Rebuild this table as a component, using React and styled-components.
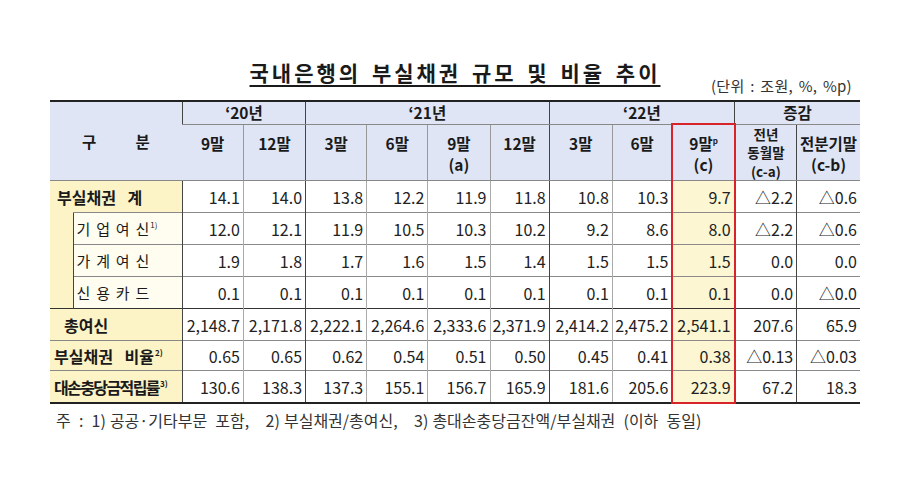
import React from 'react';
import styled, { createGlobalStyle } from 'styled-components';

const GlobalStyle = createGlobalStyle`
  html, body {
    margin: 0;
    padding: 0;
    background: #ffffff;
  }
  body {
    font-family: 'Noto Sans CJK KR', 'Noto Sans', sans-serif;
    color: #222;
  }
`;

const Page = styled.div`
  width: 900px;
  height: 479px;
  padding: 58px 0 0 50px;
  box-sizing: border-box;
  display: flex;
  flex-direction: column;
`;

const Heading = styled.div`
  width: 810px;
  padding-bottom: 5px;
  display: flex;
  flex-direction: column;
`;

const Title = styled.h1`
  margin: 0;
  text-align: center;
  font-size: 21px;
  line-height: 28px;
  font-weight: 700;
  letter-spacing: 3px;
  word-spacing: 3px;
  color: #1a1a1a;
  text-decoration: underline;
  text-decoration-thickness: 1.5px;
  text-underline-offset: 4px;
`;

const Unit = styled.div`
  margin-top: -9px;
  padding-right: 8px;
  text-align: right;
  font-size: 15px;
  line-height: 18px;
  letter-spacing: 0.3px;
  word-spacing: 2px;
  color: #333;
`;

const Table = styled.table`
  width: 810px;
  table-layout: fixed;
  border-collapse: collapse;
  border-top: 2px solid #222;
  border-bottom: 2px solid #222;
  font-size: 16px;
  sup {
    line-height: 0;
  }
`;

const Row = styled.tr`
  height: ${(p) => p.$h};
`;

const HeadCell = styled.th`
  background: #dfe5f5;
  font-weight: 700;
  font-size: ${(p) => (p.$tight ? '13.5px' : '15.5px')};
  color: #1a1a1a;
  text-align: center;
  vertical-align: ${(p) => (p.$top ? 'top' : 'middle')};
  padding: ${(p) => (p.$top ? '8px 0 0' : '0')};
  line-height: ${(p) => (p.$tight ? '18.6px' : '21px')};
  border-left: 1px solid ${(p) => (p.$dark ? '#444' : '#999')};
  border-bottom: 1px solid #888;
  ${(p) => p.$red && 'border-left: 2px solid #d9232a; border-right: 2px solid #d9232a; border-top: 2px solid #d9232a;'}
  &:first-child {
    border-left: none;
  }
  sup {
    font-size: 8px;
    vertical-align: 6px;
  }
`;

const Spread = styled.span`
  display: flex;
  justify-content: space-between;
  padding: 0 32px;
`;

const LabelCell = styled.td`
  background: ${(p) => (p.$sub ? '#fffdf0' : '#fcf3c6')};
  font-weight: ${(p) => (p.$sub ? 400 : 700)};
  font-size: ${(p) => (p.$sub ? '15px' : '16px')};
  letter-spacing: ${(p) => p.$ls || '0'};
  word-spacing: ${(p) => p.$ws || '0'};
  padding: 0 0 0 ${(p) => p.$pl || '4px'};
  white-space: pre;
  color: #1a1a1a;
  border-top: 1px solid ${(p) => (p.$darkTop ? '#333' : '#888')};
  border-left: ${(p) => (p.$sub ? '1px solid #444' : 'none')};
  sup {
    font-size: 8px;
    vertical-align: 7px;
    letter-spacing: 0;
    margin-left: 1px;
  }
`;

const Strip = styled.td`
  background: #fcf3c6;
  padding: 0;
`;

const Num = styled.td`
  text-align: right;
  padding: 0 3px 0 0;
  white-space: nowrap;
  color: #222;
  background: ${(p) => (p.$mark ? '#fdf6d3' : '#fff')};
  border-top: 1px solid ${(p) => (p.$darkTop ? '#333' : '#8a8a8a')};
  border-left: 1px solid ${(p) => (p.$dark ? '#444' : '#aaa')};
  ${(p) => p.$mark && 'border-left: 2px solid #d9232a; border-right: 2px solid #d9232a;'}
  ${(p) => p.$mark && p.$last && 'border-bottom: 2px solid #d9232a;'}
`;

const Note = styled.p`
  margin: 6px 0 0 6px;
  font-size: 16px;
  line-height: 20px;
  word-spacing: 0.5px;
  color: #333;
  white-space: pre;
`;

const widths = [23, 109, 61, 62, 61, 61, 62, 59, 63, 60, 62, 62, 63];
const darkCols = [0, 2, 6, 9, 10];

const rows = [
  { label: '부실채권 계', ws: '8px', pl: '7px', h: '32px', vals: ['14.1', '14.0', '13.8', '12.2', '11.9', '11.8', '10.8', '10.3', '9.7', '△2.2', '△0.6'] },
  { label: '기 업 여 신', sup: '1)', sub: true, h: '32px', vals: ['12.0', '12.1', '11.9', '10.5', '10.3', '10.2', '9.2', '8.6', '8.0', '△2.2', '△0.6'] },
  { label: '가 계 여 신', sub: true, h: '32px', vals: ['1.9', '1.8', '1.7', '1.6', '1.5', '1.4', '1.5', '1.5', '1.5', '0.0', '0.0'] },
  { label: '신 용 카 드', sub: true, h: '32px', vals: ['0.1', '0.1', '0.1', '0.1', '0.1', '0.1', '0.1', '0.1', '0.1', '0.0', '△0.0'] },
  { label: '총여신', pl: '14px', darkTop: true, h: '32px', vals: ['2,148.7', '2,171.8', '2,222.1', '2,264.6', '2,333.6', '2,371.9', '2,414.2', '2,475.2', '2,541.1', '207.6', '65.9'] },
  { label: '부실채권 비율', ws: '8px', sup: '2)', h: '30px', vals: ['0.65', '0.65', '0.62', '0.54', '0.51', '0.50', '0.45', '0.41', '0.38', '△0.13', '△0.03'] },
  { label: '대손충당금적립률', sup: '3)', ls: '-1.6px', h: '32px', vals: ['130.6', '138.3', '137.3', '155.1', '156.7', '165.9', '181.6', '205.6', '223.9', '67.2', '18.3'] },
];

const subHeads = [
  { t: ['9말'], dark: true },
  { t: ['12말'] },
  { t: ['3말'], dark: true },
  { t: ['6말'] },
  { t: ['9말', '(a)'] },
  { t: ['12말'] },
  { t: ['3말'], dark: true },
  { t: ['6말'] },
  { t: ['9말', '(c)'], red: true, sup: 'p' },
  { t: ['전년', '동월말', '(c-a)'], tight: true, dark: true },
  { t: ['전분기말', '(c-b)'], dark: true },
];

const Lines = ({ items, sup }) =>
  items.map((line, i) => (
    <React.Fragment key={i}>
      {i > 0 && <br />}
      {line}
      {i === 0 && sup && <sup>{sup}</sup>}
    </React.Fragment>
  ));

const App = () => {
  return (
    <Page>
      <GlobalStyle />
      <Heading>
        <Title>국내은행의 부실채권 규모 및 비율 추이</Title>
        <Unit>(단위 : 조원, %, %p)</Unit>
      </Heading>
      <Table>
        <colgroup>
          {widths.map((w, i) => (
            <col key={i} style={{ width: w }} />
          ))}
        </colgroup>
        <thead>
          <Row $h="22px">
            <HeadCell colSpan={2} rowSpan={2}>
              <Spread>
                <span>구</span>
                <span>분</span>
              </Spread>
            </HeadCell>
            <HeadCell colSpan={2} $dark>‘20년</HeadCell>
            <HeadCell colSpan={4} $dark>‘21년</HeadCell>
            <HeadCell colSpan={3} $dark>‘22년</HeadCell>
            <HeadCell colSpan={2} $dark>증감</HeadCell>
          </Row>
          <Row $h="56px">
            {subHeads.map((h, i) => (
              <HeadCell
                key={i}
                $top={!h.tight}
                $tight={h.tight}
                $dark={h.dark}
                $red={h.red}
              >
                <Lines items={h.t} sup={h.sup} />
              </HeadCell>
            ))}
          </Row>
        </thead>
        <tbody>
          {rows.map((r, ri) => (
            <Row key={ri} $h={r.h}>
              {r.sub ? (
                <>
                  {ri === 1 && <Strip rowSpan={3} />}
                  <LabelCell $sub $pl="3px" $ws="2.5px">
                    {r.label}
                    {r.sup && <sup>{r.sup}</sup>}
                  </LabelCell>
                </>
              ) : (
                <LabelCell colSpan={2} $pl={r.pl} $ls={r.ls} $ws={r.ws} $darkTop={r.darkTop}>
                  {r.label}
                  {r.sup && <sup>{r.sup}</sup>}
                </LabelCell>
              )}
              {r.vals.map((v, vi) => (
                <Num
                  key={vi}
                  $dark={darkCols.includes(vi)}
                  $mark={vi === 8}
                  $last={ri === rows.length - 1}
                  $darkTop={r.darkTop}
                >
                  {v}
                </Num>
              ))}
            </Row>
          ))}
        </tbody>
      </Table>
      <Note>주  :  1) 공공·기타부문  포함,    2) 부실채권/총여신,    3) 총대손충당금잔액/부실채권  (이하  동일)</Note>
    </Page>
  );
};

export default App;
